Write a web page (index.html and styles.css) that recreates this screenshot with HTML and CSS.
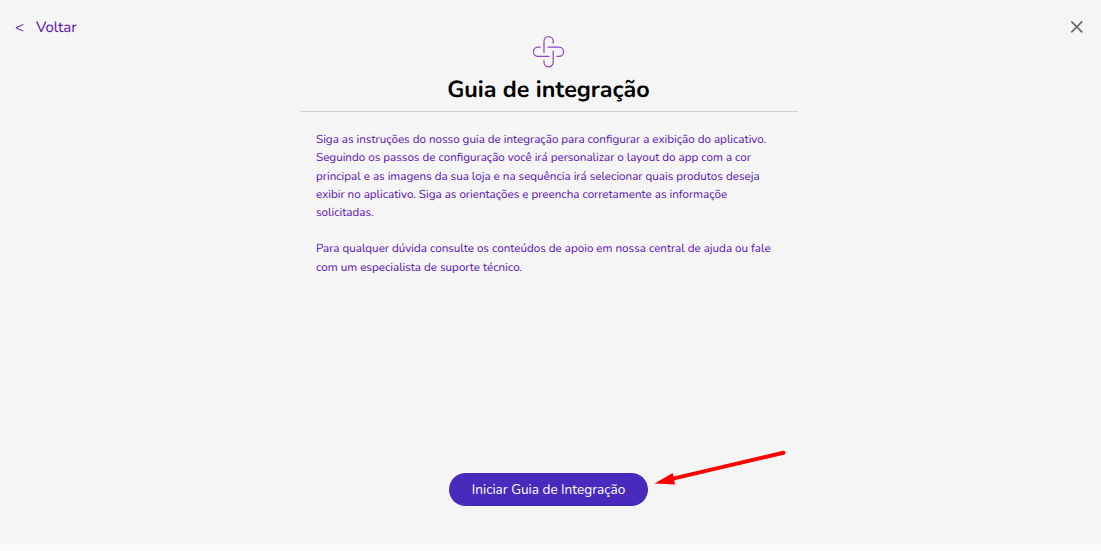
FILE: index.html
```html
<!DOCTYPE html>
<html lang="pt-BR">
<head>
<meta charset="UTF-8">
<meta name="viewport" content="width=device-width, initial-scale=1.0">
<title>Guia de integração</title>
<link rel="stylesheet" href="styles.css">
</head>
<body>

<div class="page">
  <header class="topbar">
    <a class="back" href="#"><span class="back-arrow">&lt;</span><span class="back-text">Voltar</span></a>
    <button class="close" type="button" aria-label="Fechar">
      <svg width="14" height="14" viewBox="0 0 14 14"><path d="M1.3 1.3l11 11M12.3 1.3l-11 11"/></svg>
    </button>
  </header>

  <main class="guide">
    <svg class="logo" width="32" height="32" viewBox="0.5 0 32 32">
      <path d="M11.5 16.5V5.2a4.6 4.6 0 0 1 9.2 0V7.2"/>
      <path d="M15.5 11.2H26.5a4.6 4.6 0 0 1 0 9.2H24.5"/>
      <path d="M20.7 15.2V26.2a4.6 4.6 0 0 1-9.2 0V24.5"/>
      <path d="M16.5 20.4H5.5a4.6 4.6 0 0 1 0-9.2H7.5"/>
    </svg>
    <h1 class="title">Guia de integração</h1>

    <div class="text">
      <p>
        <span class="line">Siga as instruções do nosso guia de integração para configurar a exibição do aplicativo.</span>
        <span class="line">Seguindo os passos de configuração você irá personalizar o layout do app com a cor</span>
        <span class="line">principal e as imagens da sua loja e na sequência irá selecionar quais produtos deseja</span>
        <span class="line">exibir no aplicativo. Siga as orientações e preencha corretamente as informaçõe</span>
        <span class="line">solicitadas.</span>
      </p>
      <p>
        <span class="line">Para qualquer dúvida consulte os conteúdos de apoio em nossa central de ajuda ou fale</span>
        <span class="line">com um especialista de suporte técnico.</span>
      </p>
    </div>

    <button class="start" type="button"><span>Iniciar Guia de Integração</span></button>
  </main>

  <svg class="pointer" width="134" height="40" viewBox="0 0 134 40">
    <path class="pointer-line" d="M130.5 4.7L20 30.6"/>
    <path class="pointer-head" d="M1.5 35.4L19.7 25L22 36.5Z"/>
  </svg>
</div>

</body>
</html>
```
FILE: styles.css
```css
* {
  box-sizing: border-box;
}

body {
  margin: 0;
  background-color: #fafafa;
  font-family: Nunito, Lato, sans-serif;
  text-rendering: geometricPrecision;
}

button {
  border: none;
  padding: 0;
  background: none;
  font-family: inherit;
  cursor: pointer;
}

.page {
  position: relative;
  height: 543px;
  background-color: #f5f5f5;
}

.topbar {
  display: flex;
  justify-content: space-between;
  height: 36px;
  padding: 17px 17px 0 15px;
}

.back {
  display: flex;
  gap: 12px;
  height: 20px;
  line-height: 22px;
  font-size: 15px;
  color: #5a0fb0;
  text-decoration: none;
}

.close {
  width: 14px;
  height: 14px;
  margin-top: 3px;
}

.close svg {
  display: block;
  fill: none;
  stroke: #6b6b6b;
  stroke-width: 1.7;
}

.guide {
  display: flex;
  flex-direction: column;
  align-items: center;
  width: 498px;
  height: 507px;
  margin-left: 300px;
}

.logo {
  flex: none;
  margin-right: 1px;
  fill: none;
  stroke: #8a45c9;
  stroke-width: 1.2;
  stroke-linecap: round;
}

.title {
  width: 100%;
  height: 44px;
  margin: 0;
  padding-top: 6px;
  padding-right: 1px;
  border-bottom: 1px solid #d0d2d2;
  line-height: 32px;
  font-size: 23.3px;
  font-weight: 700;
  text-align: center;
  color: #000;
}

.text {
  width: 100%;
  padding: 19.1px 16px 0;
  font-size: 11.64px;
  line-height: 18.22px;
  color: #5a0fb0;
}

.text p {
  margin: 0 0 18.22px;
}

.line {
  display: table;
  white-space: nowrap;
}

.start {
  width: 199px;
  height: 33px;
  margin-top: auto;
  margin-right: 1px;
  margin-bottom: 37px;
  border-radius: 17px;
  background-color: #482abd;
  font-size: 13.58px;
  color: #fff;
}

/* arrow drawn over the page, pointing at the button */
.pointer {
  position: absolute;
  left: 653px;
  top: 448px;
}

.pointer-line {
  fill: none;
  stroke: #f00;
  stroke-width: 4;
  stroke-linecap: round;
}

.pointer-head {
  fill: #f00;
}
```
